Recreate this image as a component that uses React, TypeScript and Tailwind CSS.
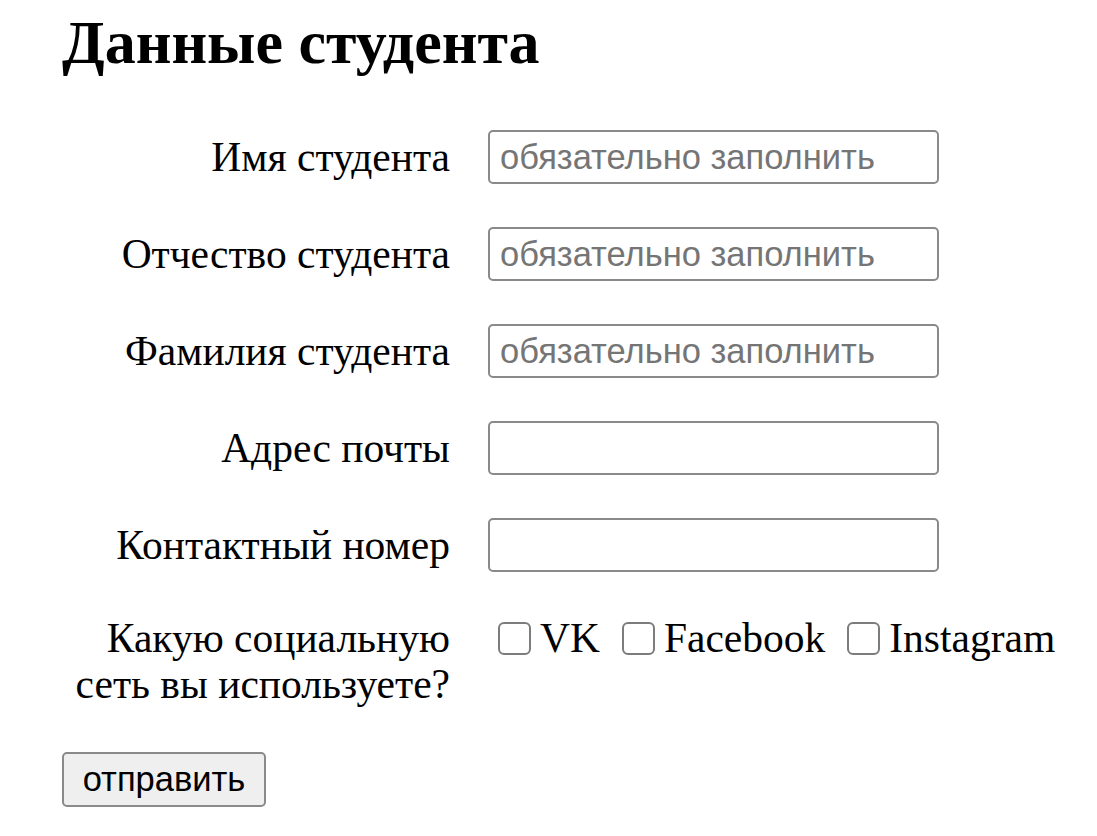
const serif = { fontFamily: '"Liberation Serif", "Times New Roman", serif' }

const Field = ({ label, placeholder }: { label: string; placeholder?: string }) => {
    return (
        <div className="flex items-center">
            <label className="w-[388px] text-right text-[41.5px] leading-[46px] text-black" style={serif}>
                {label}
            </label>
            <input
                type="text"
                placeholder={placeholder}
                className="ml-[38px] w-[451px] h-[54px] border-2 border-[#8a8a8a] rounded-[5px] pl-[10px] text-[34.5px] font-['Liberation_Sans',Arial,sans-serif] placeholder:text-[#757575] outline-none"
            />
        </div>
    )
}

const Social = ({ name }: { name: string }) => {
    return (
        <label className="flex items-center">
            <span className="w-[33px] h-[33px] border-2 border-[#7c7c7c] rounded-[6px] bg-white" />
            <span className="ml-[9px] text-[41.5px] leading-[46px]" style={serif}>{name}</span>
        </label>
    )
}

export default function App() {
    return (
        <div className="min-h-screen bg-white text-black pl-[62px] pt-[11px]">
            <h1 className="text-[62px] leading-none font-bold" style={serif}>Данные студента</h1>

            <div className="mt-[57px] flex flex-col gap-[43px]">
                <Field label="Имя студента" placeholder="обязательно заполнить" />
                <Field label="Отчество студента" placeholder="обязательно заполнить" />
                <Field label="Фамилия студента" placeholder="обязательно заполнить" />
                <Field label="Адрес почты" />
                <Field label="Контактный номер" />

                <div className="flex items-start">
                    <p className="w-[388px] text-right text-[41.5px] leading-[46px]" style={serif}>
                        Какую социальную<br />сеть вы используете?
                    </p>
                    <div className="ml-[48px] flex gap-[22px]">
                        <Social name="VK" />
                        <Social name="Facebook" />
                        <Social name="Instagram" />
                    </div>
                </div>
            </div>

            <button className="mt-[45px] w-[204px] h-[55px] bg-[#efefef] border-2 border-[#8a8a8a] rounded-[5px] text-[34.5px] font-['Liberation_Sans',Arial,sans-serif]">
                отправить
            </button>
        </div>
    )
}
